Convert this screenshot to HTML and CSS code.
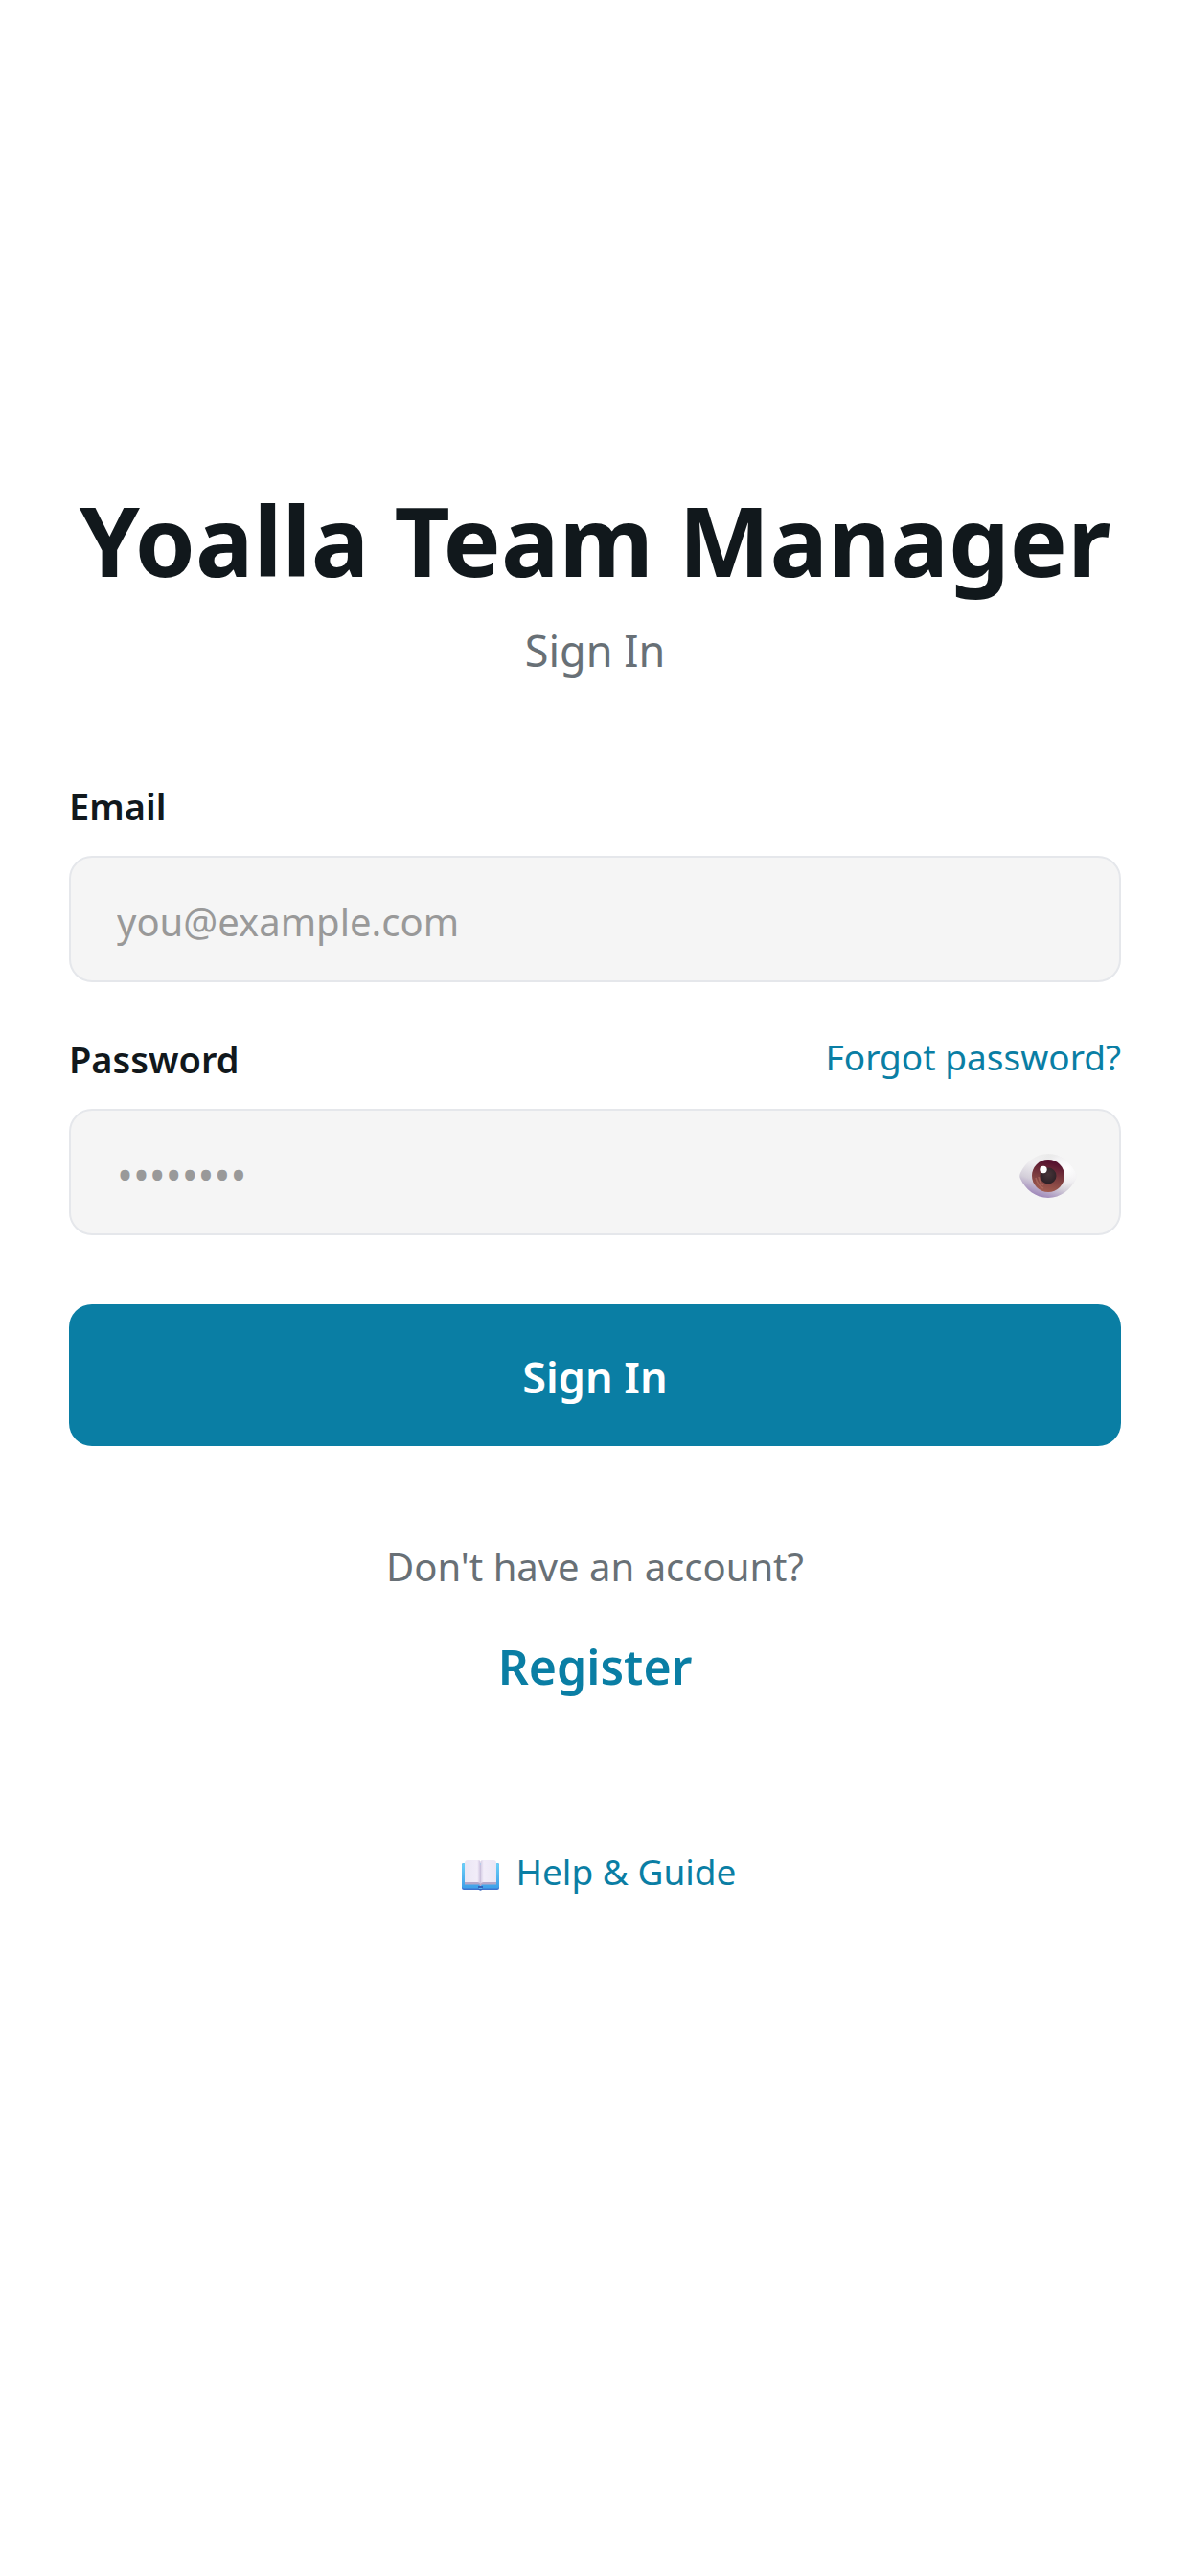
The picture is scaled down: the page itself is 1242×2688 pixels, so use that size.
FILE: index.html
```html
<!DOCTYPE html>
<html lang="en">
<head>
  <meta charset="UTF-8">
  <meta name="viewport" content="width=device-width, initial-scale=1.0">
  <title>Yoalla Team Manager</title>
  <link rel="stylesheet" href="styles.css">
</head>
<body>
  <main class="login">
    <h1 class="title">Yoalla Team Manager</h1>
    <p class="subtitle">Sign In</p>

    <form class="login-form">
      <div class="field">
        <label for="email">Email</label>
        <input type="email" id="email" placeholder="you@example.com">
      </div>

      <div class="field">
        <div class="label-row">
          <label for="password">Password</label>
          <a class="link" href="#">Forgot password?</a>
        </div>
        <div class="password-box">
          <input type="password" id="password" placeholder="••••••••">
          <button type="button" class="toggle" aria-label="Show password">
            <svg class="eye" viewBox="0 0 60 46">
              <defs>
                <linearGradient id="white" x1="0.2" y1="1" x2="0.6" y2="0.1">
                  <stop offset="0" stop-color="#8f72b0"/>
                  <stop offset="0.4" stop-color="#d3ced9"/>
                  <stop offset="0.75" stop-color="#f0eff1"/>
                  <stop offset="1" stop-color="#ececec"/>
                </linearGradient>
                <radialGradient id="shine" cx="0.82" cy="0.35" r="0.5">
                  <stop offset="0" stop-color="#fff"/>
                  <stop offset="0.6" stop-color="#f4f3f5" stop-opacity="0.7"/>
                  <stop offset="1" stop-color="#ddd" stop-opacity="0"/>
                </radialGradient>
                <linearGradient id="iris" x1="0.6" y1="0.1" x2="0.4" y2="1">
                  <stop offset="0" stop-color="#57132f"/>
                  <stop offset="0.5" stop-color="#7c3d3f"/>
                  <stop offset="1" stop-color="#a35d50"/>
                </linearGradient>
                <radialGradient id="pupil" cx="0.5" cy="0.4" r="0.6">
                  <stop offset="0" stop-color="#483539"/>
                  <stop offset="1" stop-color="#2c2026"/>
                </radialGradient>
              </defs>
              <path fill="url(#white)" d="M1 20C6 9 17 0 30 0s24 9 29 20c1 2 1 4 0 6-5 11-16 20-29 20S6 37 1 26c-1-2-1-4 0-6z"/>
              <path fill="url(#shine)" d="M1 20C6 9 17 0 30 0s24 9 29 20c1 2 1 4 0 6-5 11-16 20-29 20S6 37 1 26c-1-2-1-4 0-6z"/>
              <circle cx="30" cy="23" r="17" fill="url(#iris)"/>
              <path d="M17 25q2 8 8 11M20 24q1 6 5 9" fill="none" stroke="#b87467" stroke-width="1.5" opacity="0.6"/>
              <circle cx="30" cy="23" r="8.5" fill="url(#pupil)"/>
              <circle cx="25" cy="16.5" r="3.7" fill="#fff"/>
            </svg>
          </button>
        </div>
      </div>

      <button type="submit" class="submit">Sign In</button>
    </form>

    <p class="question">Don't have an account?</p>
    <a class="register" href="#">Register</a>

    <a class="link help" href="#">
      <svg class="book" viewBox="0 0 39 32">
        <defs>
          <linearGradient id="cover" x1="0" y1="0" x2="0" y2="1">
            <stop offset="0" stop-color="#6cd0f8"/>
            <stop offset="1" stop-color="#3f9fe8"/>
          </linearGradient>
          <linearGradient id="left" x1="0" y1="0" x2="1" y2="0">
            <stop offset="0" stop-color="#eae6f4"/>
            <stop offset="0.8" stop-color="#f2edf9"/>
            <stop offset="1" stop-color="#cdc2de"/>
          </linearGradient>
          <linearGradient id="right" x1="0" y1="0" x2="1" y2="0">
            <stop offset="0" stop-color="#d5cce4"/>
            <stop offset="0.2" stop-color="#f2edf9"/>
            <stop offset="1" stop-color="#ebe6f5"/>
          </linearGradient>
        </defs>
        <rect x="0" y="3" width="39" height="28" rx="2" fill="#3d73cf"/>
        <rect x="0" y="3" width="39" height="26.5" rx="2" fill="url(#cover)"/>
        <path fill="#b5a8c9" d="M3 5h33v20.5H21l-1.5 2-1.5-2H3z"/>
        <path fill="url(#left)" d="M3 3q0-3 3-3h11q2.500 0 2.500 2v23q-1-2-3-2H3z"/>
        <path fill="url(#right)" d="M36 3q0-3-3-3H22q-2.500 0-2.500 2v23q1-2 3-2H36z"/>
        <path fill="#3564bd" d="M17 27h5v3q-2.500 3.500-5 0z"/>
        <path fill="#58b5ef" d="M17.500 29h4v1h-4z"/>
      </svg>
      <span>Help &amp; Guide</span>
    </a>
  </main>
</body>
</html>
```

FILE: styles.css
```css
* {
  padding: 0;
  margin: 0;
  box-sizing: border-box;
}

body {
  background: #fff;
  color: #11181c;
  font-family: "Segoe UI", "Noto Sans", sans-serif;
  font-size: 40px;
  line-height: 56px;
}

input,
button {
  font: inherit;
}

a {
  color: #0a7ea4;
  text-decoration: none;
}

.login {
  min-height: 100vh;
  padding: 0 72px 218px;
  display: flex;
  flex-direction: column;
  align-items: center;
  justify-content: center;
}

.title {
  font-size: 101px;
  font-weight: 700;
  line-height: 144px;
  white-space: nowrap;
}

.subtitle {
  margin-top: 12px;
  color: #687076;
  font-size: 45px;
  line-height: 64px;
}

.login-form {
  width: 100%;
  margin-top: 102px;
}

.field {
  margin-bottom: 52px;
}

.field label {
  display: block;
  font-size: 38px;
  font-weight: 600;
}

.label-row {
  display: flex;
  justify-content: space-between;
  align-items: flex-start;
}

.field input {
  display: block;
  width: 100%;
  height: 132px;
  margin-top: 24px;
  padding: 4px 48px 0;
  border: 2px solid #e5e7eb;
  border-radius: 24px;
  background: #f5f5f5;
  color: #11181c;
}

.field input::placeholder {
  color: #999;
  opacity: 1;
}

.password-box {
  position: relative;
}

.password-box input {
  padding-right: 152px;
  font-size: 45px;
}

.toggle {
  position: absolute;
  top: 0;
  right: 0;
  height: 100%;
  padding: 8px 46px 0;
  border: none;
  background: none;
  cursor: pointer;
}

.eye {
  display: block;
  width: 60px;
  height: 46px;
}

.link {
  font-size: 37px;
  line-height: 52px;
}

.submit {
  display: block;
  width: 100%;
  height: 148px;
  margin-top: 72px;
  padding-top: 4px;
  border: none;
  border-radius: 24px;
  background: #0a7ea4;
  color: #fff;
  font-size: 45px;
  font-weight: 600;
  cursor: pointer;
}

.question {
  margin-top: 98px;
  color: #687076;
}

.register {
  margin-top: 40px;
  font-size: 50px;
  font-weight: 600;
  line-height: 72px;
}

.help {
  margin-top: 152px;
  padding-left: 8px;
  display: flex;
  align-items: center;
  gap: 18px;
}

.book {
  width: 39px;
  height: 32px;
  margin-top: 8px;
}
```
